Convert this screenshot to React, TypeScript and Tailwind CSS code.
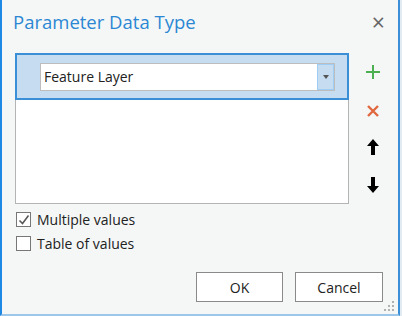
import { useState } from "react";

const PlusIcon = () => (
  <svg width="16" height="16" viewBox="0 0 16 16">
    <path d="M8 1v14M1 8h14" stroke="#4caf50" strokeWidth="2" />
  </svg>
);

const CrossIcon = () => (
  <svg width="14" height="14" viewBox="0 0 14 14">
    <path d="M2 2l10 10M12 2L2 12" stroke="#e0683f" strokeWidth="2.4" />
  </svg>
);

const ArrowUp = () => (
  <svg width="14" height="18" viewBox="0 0 14 18">
    <path d="M7 1L1 8h4v9h4V8h4z" fill="#000" />
  </svg>
);

const ArrowDown = () => (
  <svg width="14" height="18" viewBox="0 0 14 18">
    <path d="M7 17L1 10h4V1h4v9h4z" fill="#000" />
  </svg>
);

const Check = () => (
  <svg width="12" height="12" viewBox="0 0 12 12">
    <path d="M1.5 6.5l3 3 6-8" stroke="#555" strokeWidth="1.5" fill="none" />
  </svg>
);

const App = () => {
  const [multiple, setMultiple] = useState(true);
  const [table, setTable] = useState(false);

  return (
    <div className="flex w-[402px] h-[316px] bg-[#e3ebf2]" style={{ fontFamily: '"Open Sans", "Noto Sans", sans-serif' }}>
      <div className="relative flex flex-col w-[400px] h-[316px] bg-[#f5f7f7] border-l-2 border-r-2 border-b-2 border-l-[#1e88e5] border-r-[#3b8fd6] border-b-[#9cc6ea]">
        {/* header */}
        <div className="flex items-start justify-between h-[53px] pl-[11px] pr-[13px] pt-[10px]">
          <span className="text-[18.5px] leading-[24px] text-[#2b87d3]">Parameter Data Type</span>
          <button className="mt-[3px] text-[#666] text-[23px] leading-[18px]">×</button>
        </div>

        {/* list + side buttons */}
        <div className="flex pl-[13px]">
          <div className="flex flex-col w-[334px] h-[151px] bg-white border border-[#b4b4b4]">
            <div className="flex items-center h-[47px] -mt-px -mx-px bg-[#c6dcf0] border-2 border-[#3b8fd6] pl-[23px] pr-[12px]">
              <div className="flex flex-1 h-[28px] bg-white border border-[#bdbdbd]">
                <span className="flex-1 pl-[3px] text-[14px] leading-[26px] text-[#222]">Feature Layer</span>
                <div className="flex items-center justify-center w-[17px] bg-[#c6dcf0] border border-[#9fcdf3]">
                  <div className="w-0 h-0 border-l-[3px] border-r-[3px] border-t-[4px] border-l-transparent border-r-transparent border-t-[#555]" />
                </div>
              </div>
            </div>
          </div>
          <div className="flex flex-col items-center w-[46px] ml-[1px]">
            <div className="mt-[11px] h-[16px] flex items-center"><PlusIcon /></div>
            <div className="mt-[24px] h-[14px] flex items-center"><CrossIcon /></div>
            <div className="mt-[20px] h-[18px] flex items-center"><ArrowUp /></div>
            <div className="mt-[20px] h-[18px] flex items-center"><ArrowDown /></div>
          </div>
        </div>

        {/* options */}
        <div className="flex flex-col gap-[9px] pl-[14px] mt-[8px]">
          <label className="flex items-center gap-[6px] cursor-pointer" onClick={() => setMultiple(!multiple)}>
            <span className="flex items-center justify-center w-[15px] h-[15px] bg-white border border-[#777]">
              {multiple && <Check />}
            </span>
            <span className="text-[14px] leading-[15px] text-[#222]">Multiple values</span>
          </label>
          <label className="flex items-center gap-[6px] cursor-pointer" onClick={() => setTable(!table)}>
            <span className="flex items-center justify-center w-[15px] h-[15px] bg-white border border-[#777]">
              {table && <Check />}
            </span>
            <span className="text-[14px] leading-[15px] text-[#222]">Table of values</span>
          </label>
        </div>

        {/* buttons */}
        <div className="flex justify-end gap-[12px] pr-[15px] mt-auto mb-[12px]">
          <button className="w-[87px] h-[30px] bg-white border border-[#8a8a8a] text-[14px] text-[#222]">OK</button>
          <button className="w-[88px] h-[30px] bg-white border border-[#8a8a8a] text-[14px] text-[#222]">Cancel</button>
        </div>

        {/* resize grip */}
        <div className="absolute right-[4px] bottom-[3px] grid grid-cols-3 gap-[2px]">
          <span />
          <span />
          <span className="w-[2px] h-[2px] bg-[#b0b0b0]" />
          <span />
          <span className="w-[2px] h-[2px] bg-[#b0b0b0]" />
          <span className="w-[2px] h-[2px] bg-[#b0b0b0]" />
          <span className="w-[2px] h-[2px] bg-[#b0b0b0]" />
          <span className="w-[2px] h-[2px] bg-[#b0b0b0]" />
          <span className="w-[2px] h-[2px] bg-[#b0b0b0]" />
        </div>
      </div>
    </div>
  );
};

export default App;
